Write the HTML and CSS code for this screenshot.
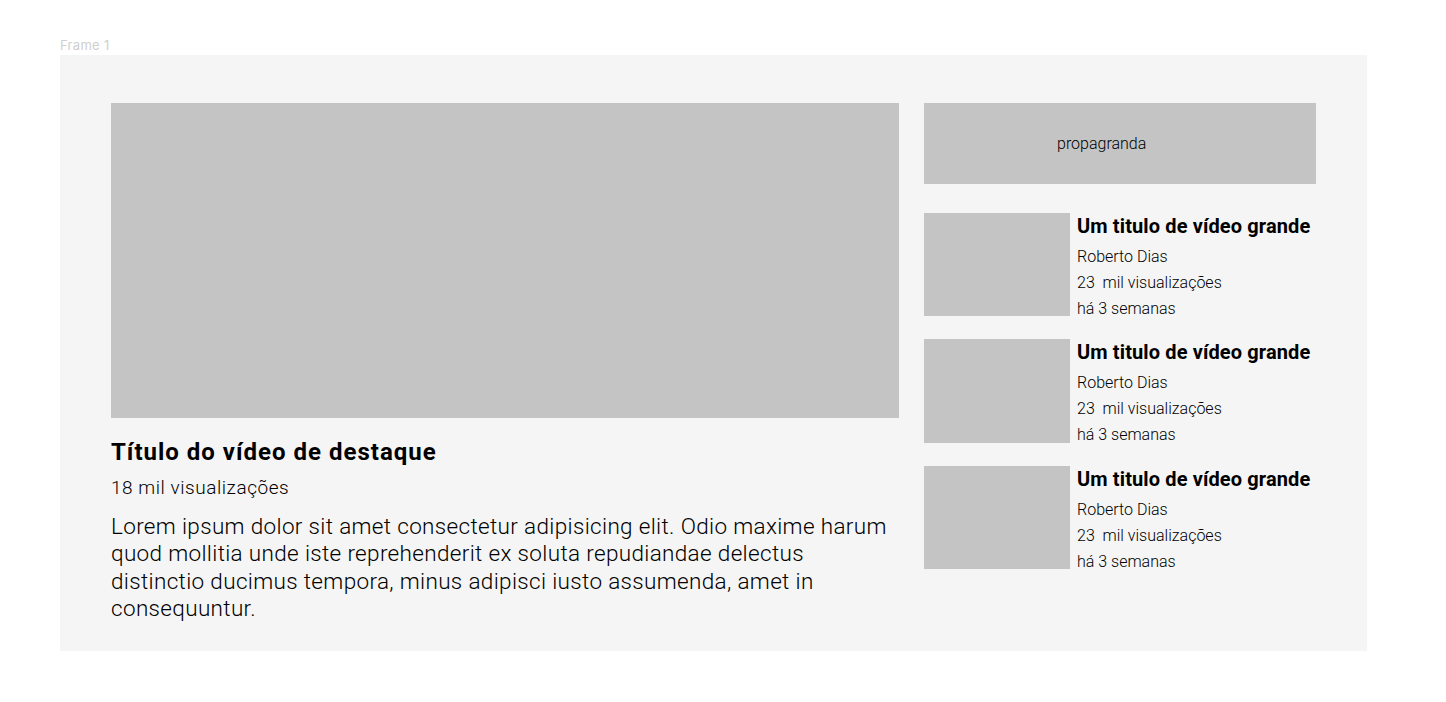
FILE: index.html
```html
<!DOCTYPE html>
<html lang="pt">
<head>
<meta charset="utf-8">
<title>Frame 1</title>
<link rel="stylesheet" href="styles.css">
</head>
<body>
<div class="frame-label">Frame 1</div>
<div class="frame">
  <main class="main">
    <div class="video"></div>
    <h1 class="main-title">Título do vídeo de destaque</h1>
    <p class="main-views">18 mil visualizações</p>
    <p class="main-desc">Lorem ipsum dolor sit amet consectetur adipisicing elit. Odio maxime harum quod mollitia unde iste reprehenderit ex soluta repudiandae delectus distinctio ducimus tempora, minus adipisci iusto assumenda, amet in consequuntur.</p>
  </main>
  <aside class="side">
    <div class="ad">propagranda</div>
    <div class="list">
      <div class="item">
        <div class="thumb"></div>
        <div class="info">
          <h2 class="item-title">Um titulo de vídeo grande</h2>
          <p class="meta">Roberto Dias</p>
          <p class="meta">23&nbsp; mil visualizações</p>
          <p class="meta">há 3 semanas</p>
        </div>
      </div>
      <div class="item">
        <div class="thumb"></div>
        <div class="info">
          <h2 class="item-title">Um titulo de vídeo grande</h2>
          <p class="meta">Roberto Dias</p>
          <p class="meta">23&nbsp; mil visualizações</p>
          <p class="meta">há 3 semanas</p>
        </div>
      </div>
      <div class="item">
        <div class="thumb"></div>
        <div class="info">
          <h2 class="item-title">Um titulo de vídeo grande</h2>
          <p class="meta">Roberto Dias</p>
          <p class="meta">23&nbsp; mil visualizações</p>
          <p class="meta">há 3 semanas</p>
        </div>
      </div>
    </div>
  </aside>
</div>
</body>
</html>
```
FILE: styles.css
```css
* { box-sizing: border-box; }
html, body { margin: 0; padding: 0; background: #ffffff; }
body { font-family: Roboto, "Liberation Sans", sans-serif; color: #000; }

.frame-label {
  font-family: Inter, "Liberation Sans", sans-serif;
  font-size: 13px;
  line-height: 14px;
  letter-spacing: 0.3px;
  color: #cfcfcf;
  padding: 38px 0 0 60px;
  margin-bottom: 3px;
}

.frame {
  margin-left: 60px;
  width: 1307px;
  height: 596px;
  background: #f5f5f5;
  padding: 48px 51px;
  display: flex;
  gap: 25px;
}

.main { width: 788px; flex: none; }
.video { height: 315px; background: #c4c4c4; }
.main-title {
  margin: 20px 0 0;
  font-size: 24px;
  line-height: 28px;
  font-weight: 700;
  letter-spacing: 1px;
}
.main-views {
  margin: 11px 0 0;
  font-size: 19px;
  line-height: 22px;
  font-weight: 300;
  letter-spacing: 0.55px;
}
.main-desc {
  margin: 14px 0 0;
  font-size: 22.5px;
  line-height: 27.3px;
  font-weight: 300;
  letter-spacing: 0.34px;
}

.side { width: 392px; flex: none; }
.ad {
  height: 81px;
  background: #c4c4c4;
  display: flex;
  align-items: center;
  padding-left: 133px;
  font-size: 16px;
  font-weight: 300;
}
.list {
  margin-top: 29px;
  display: flex;
  flex-direction: column;
  gap: 23px;
}
.item { display: flex; gap: 7px; height: 103.3px; }
.thumb { width: 146px; flex: none; background: #c4c4c4; }
.info { min-width: 0; }
.item-title {
  margin: 0 0 5px;
  font-size: 20px;
  line-height: 26px;
  font-weight: 700;
  letter-spacing: 0.12px;
  white-space: nowrap;
}
.meta {
  margin: 0;
  font-size: 16px;
  line-height: 26px;
  font-weight: 300;
}
```
